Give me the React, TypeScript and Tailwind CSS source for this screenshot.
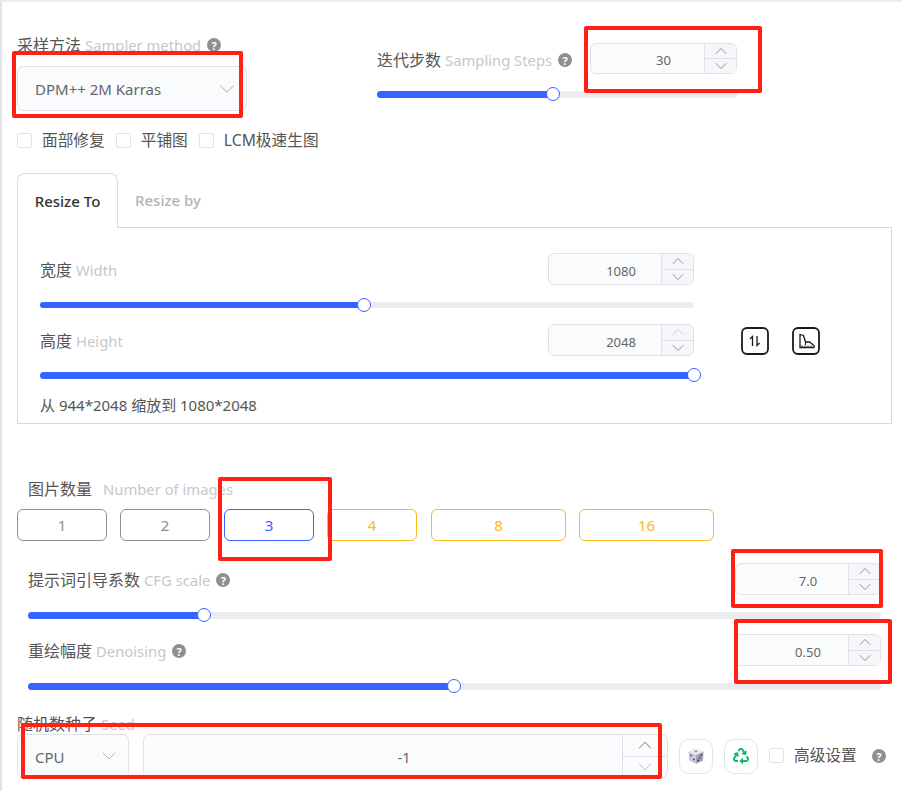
import React from "react";
import { ChevronDown, ChevronUp } from "lucide-react";
import { FaRecycle } from "react-icons/fa";

const fontStack = "font-['Noto_Sans','Noto_Sans_CJK_SC',sans-serif]";

// Section label: chinese name + grey english name
const Label = ({ cn, en, help, gap = "ml-1", className = "" }: { cn: string; en: string; help?: boolean; gap?: string; className?: string }) => (
  <div className={`flex items-center whitespace-nowrap leading-5 text-[#555] ${className}`}>
    <span className="text-[16px]">{cn}</span>
    <span className={`${gap} text-[14.8px] text-[#c8c8c8]`}>{en}</span>
    {help && <Help className="ml-[6px]" />}
  </div>
);

const Help = ({ className = "" }: { className?: string }) => (
  <span
    className={`flex h-[14px] w-[14px] shrink-0 items-center justify-center rounded-full bg-[#8f8f8f] text-[11px] font-bold leading-none text-white ${className}`}
  >
    ?
  </span>
);

const Stepper = ({ value, className = "", dimUp, dimDown }: { value: string; className?: string; dimUp?: boolean; dimDown?: boolean }) => (
  <div className={`flex overflow-hidden rounded-[6px] border border-[#dfe1e8] bg-[#fafbfd] ${className}`}>
    <div className="flex flex-1 items-center justify-center pl-[32px] pt-[5px] text-[13px] text-[#666]">{value}</div>
    <div className="flex w-[32px] flex-col border-l border-[#dfe1e8] bg-[#f5f6fa]">
      <div className="flex flex-1 items-center justify-center overflow-hidden border-b border-[#dfe1e8]">
        <ChevronUp size={20} strokeWidth={1.1} className={`shrink-0 ${dimUp ? "text-[#c9c9c9]" : "text-[#8a8a8a]"}`} />
      </div>
      <div className="flex flex-1 items-center justify-center overflow-hidden">
        <ChevronDown size={20} strokeWidth={1.1} className={`shrink-0 ${dimDown ? "text-[#c9c9c9]" : "text-[#8a8a8a]"}`} />
      </div>
    </div>
  </div>
);

const Slider = ({ percent, className = "" }: { percent: number; className?: string }) => (
  <div className={`relative rounded-full bg-[#ececec] ${className}`}>
    <div className="h-full rounded-full bg-[#3563ff]" style={{ width: `${percent}%` }} />
    <div
      className="absolute top-[-4px] ml-[-7px] h-[14px] w-[14px] rounded-full border border-[#3563ff] bg-white"
      style={{ left: `${percent}%` }}
    />
  </div>
);

const Check = ({ text, className = "" }: { text: string; className?: string }) => (
  <div className={`flex items-center whitespace-nowrap text-[15.7px] text-[#555] ${className}`}>
    <span className="mr-[10px] h-[15px] w-[15px] rounded-[2px] border border-[#dfe1e8] bg-white" />
    {text}
  </div>
);

const Select = ({ value, chevron, className = "" }: { value: string; chevron: number; className?: string }) => (
  <div className={`flex items-center justify-between rounded-[6px] border border-[#dfe1e8] bg-[#fafbfd] text-[15px] text-[#666] ${className}`}>
    <span className="pt-[2px]">{value}</span>
    <ChevronDown size={chevron} strokeWidth={0.9} className="text-[#a5a9b3]" />
  </div>
);

const CountButton = ({ text, tone, width }: { text: string; tone: string; width: string }) => (
  <div className={`flex h-[32px] items-center justify-center rounded-[6px] border text-[15px] ${tone} ${width}`}>{text}</div>
);

const grey = "border-[#8f8f8f] text-[#8f8f8f]";
const blue = "border-[#3563ff] text-[#3563ff]";
const amber = "border-[#fdb913] text-[#fdb913]";

const SwapIcon = () => (
  <svg width="28" height="28" viewBox="0 0 28 28" fill="none" stroke="#1a1a1a">
    <rect x="1" y="1" width="26" height="26" rx="5" strokeWidth="1.8" />
    <path d="M11.5 19V9.5L9 12" strokeWidth="1.3" />
    <path d="M16 9V18.5L18.5 16" strokeWidth="1.3" />
  </svg>
);

const RulerIcon = () => (
  <svg width="28" height="28" viewBox="0 0 28 28" fill="none" stroke="#1a1a1a">
    <rect x="1" y="1" width="26" height="26" rx="5" strokeWidth="1.8" />
    <path d="M8 7.5V20.5H22V18.5L17.5 15H13.5L11.5 8.5Z" strokeWidth="1.3" />
    <path d="M13.5 15V18" strokeWidth="1.1" />
    <path d="M10 20V18.5M13 20V18.5M16 20V18.5M19 20V18.5" strokeWidth="1" />
  </svg>
);

const DiceIcon = () => (
  <svg width="18" height="18" viewBox="0 0 18 18">
    <path d="M9 1L16.5 4.5L9 8L1.5 4.5Z" fill="#ece8f0" />
    <path d="M1.5 4.5L9 8V17L2 13.5Z" fill="#cfc8dc" />
    <path d="M16.5 4.5L9 8V17L16 13.5Z" fill="#a9a2ba" />
    <ellipse cx="9" cy="4.5" rx="1.4" ry="0.8" fill="#e0566a" />
    <circle cx="4" cy="8.5" r="0.9" fill="#4a4458" />
    <circle cx="6.8" cy="12.5" r="0.9" fill="#4a4458" />
    <circle cx="11.2" cy="13.5" r="0.9" fill="#3a3448" />
    <circle cx="12.7" cy="10.8" r="0.9" fill="#3a3448" />
    <circle cx="14.3" cy="8.2" r="0.9" fill="#3a3448" />
  </svg>
);

const IconButton = ({ children }: { children: React.ReactNode }) => (
  <div className="flex h-[35px] w-[34px] items-center justify-center rounded-[10px] border border-[#e3e4ea] bg-white">{children}</div>
);

// Red marks that were drawn on top of the page
const Mark = ({ className }: { className: string }) => (
  <div className={`absolute rounded-[2px] border-[4px] border-[#ff2016] ${className}`} />
);

export default function App() {
  return (
    <div className={`relative h-[791px] w-[902px] overflow-hidden border-l-2 border-t-2 border-l-[#e2e2ea] border-t-[#ececf0] bg-white pl-[15px] ${fontStack}`}>
      {/* Sampler + steps */}
      <div className="flex pt-[33px]">
        <div className="w-[230px]">
          <Label cn="采样方法" en="Sampler method" help />
          <Select value="DPM++ 2M Karras" chevron={26} className="mt-[11px] h-[45px] pl-[17px] pr-[6px]" />
        </div>
        <div className="ml-[130px] w-[360px] pt-[8px]">
          <div className="flex items-start justify-between">
            <div className="pt-[7px]">
              <Label cn="迭代步数" en="Sampling Steps" help />
            </div>
            <Stepper value="30" className="h-[31px] w-[147px]" />
          </div>
          <Slider percent={49} className="mt-[17px] h-[7px]" />
        </div>
      </div>

      {/* Options */}
      <div className="mt-[21px] flex h-[17px] items-center">
        <Check text="面部修复" />
        <Check text="平铺图" className="ml-[11px]" />
        <Check text="LCM极速生图" className="ml-[11px]" />
      </div>

      {/* Resize tabs */}
      <div className="mt-[24px] flex h-[55px] w-[875px]">
        <div className="z-10 flex h-[55px] w-[101px] items-center justify-center rounded-t-[8px] border border-b-0 border-[#dcdce2] bg-white text-[15px] font-medium text-[#333]">
          Resize To
        </div>
        <div className="flex items-center pl-[17px] text-[15px] font-medium text-[#b4b4b4]">Resize by</div>
      </div>
      <div className="mt-[-1px] h-[197px] w-[875px] border border-[#d9d9dd] pl-[22px]">
        <div className="mt-[25px] flex h-[32px] w-[654px] items-center justify-between">
          <Label cn="宽度" en="Width" className="pt-[2px]" />
          <Stepper value="1080" className="h-[32px] w-[146px]" />
        </div>
        <Slider percent={49.6} className="mt-[17px] h-[6px] w-[654px]" />
        <div className="mt-[16px] flex">
          <div className="flex h-[32px] w-[654px] items-center justify-between">
            <Label cn="高度" en="Height" className="pt-[2px]" />
            <Stepper value="2048" className="h-[32px] w-[146px]" dimUp />
          </div>
          <div className="ml-[47px] mt-[1px] flex items-center gap-[23px]">
            <SwapIcon />
            <RulerIcon />
          </div>
        </div>
        <Slider percent={100} className="mt-[16px] h-[7px] w-[654px]" />
        <div className="mt-[16px] text-[15px] leading-5 text-[#555]">从 944*2048 缩放到 1080*2048</div>
      </div>

      {/* Image count */}
      <div className="mt-[55px] pl-[11px]">
        <Label cn="图片数量" en="Number of images" gap="ml-[11px]" />
      </div>
      <div className="mt-[10px] flex">
        <CountButton text="1" tone={grey} width="w-[90px]" />
        <CountButton text="2" tone={grey} width="ml-[13px] w-[90px]" />
        <CountButton text="3" tone={blue} width="ml-[14px] w-[90px]" />
        <CountButton text="4" tone={amber} width="ml-[13px] w-[90px]" />
        <CountButton text="8" tone={amber} width="ml-[14px] w-[135px]" />
        <CountButton text="16" tone={amber} width="ml-[13px] w-[135px]" />
      </div>

      {/* CFG */}
      <div className="ml-[11px] w-[853px]">
        <div className="mt-[22px] flex h-[32px] items-center justify-between">
          <Label cn="提示词引导系数" en="CFG scale" help className="pt-[2px]" />
          <Stepper value="7.0" className="h-[32px] w-[146px]" />
        </div>
        <Slider percent={20.6} className="mt-[17px] h-[7px]" />
        <div className="mt-[15px] flex h-[32px] items-center justify-between">
          <Label cn="重绘幅度" en="Denoising" help className="pt-[2px]" />
          <Stepper value="0.50" className="h-[32px] w-[146px]" />
        </div>
        <Slider percent={49.9} className="mt-[17px] h-[7px]" />
      </div>

      {/* Seed */}
      <div className="mt-[24px] h-[20px]">
        <Label cn="随机数种子" en="Seed" />
      </div>
      <div className="flex items-center">
        <Select value="CPU" chevron={24} className="h-[44px] w-[112px] pl-[17px] pr-[7px]" />
        <div className="ml-[14px] flex h-[44px] w-[525px] overflow-hidden rounded-[6px] border border-[#dfe1e8] bg-[#fafbfd]">
          <div className="flex flex-1 items-center justify-center pl-[42px] pt-[4px] text-[14.5px] text-[#666]">-1</div>
          <div className="flex w-[45px] flex-col border-l border-[#dfe1e8]">
            <div className="flex flex-1 items-center justify-center overflow-hidden border-b border-[#dfe1e8]">
              <ChevronUp size={22} strokeWidth={1.1} className="shrink-0 text-[#8a8a8a]" />
            </div>
            <div className="flex flex-1 items-center justify-center overflow-hidden">
              <ChevronDown size={22} strokeWidth={1.1} className="shrink-0 text-[#c4c4c4]" />
            </div>
          </div>
        </div>
        <div className="ml-[11px] flex items-center">
          <IconButton>
            <DiceIcon />
          </IconButton>
          <div className="ml-[11px]">
            <IconButton>
              <FaRecycle size={16} className="text-[#12b76a]" />
            </IconButton>
          </div>
          <Check text="高级设置" className="ml-[11px]" />
          <Help className="ml-[15px]" />
        </div>
      </div>

      {/* Annotations */}
      <Mark className="left-[10px] top-[49px] h-[67px] w-[231px]" />
      <Mark className="left-[582px] top-[24px] h-[67px] w-[178px]" />
      <Mark className="left-[216px] top-[475px] h-[84px] w-[114px]" />
      <Mark className="left-[729px] top-[547px] h-[59px] w-[152px]" />
      <Mark className="left-[732px] top-[617px] h-[65px] w-[158px]" />
      <Mark className="left-[19px] top-[721px] h-[56px] w-[641px]" />
    </div>
  );
}
